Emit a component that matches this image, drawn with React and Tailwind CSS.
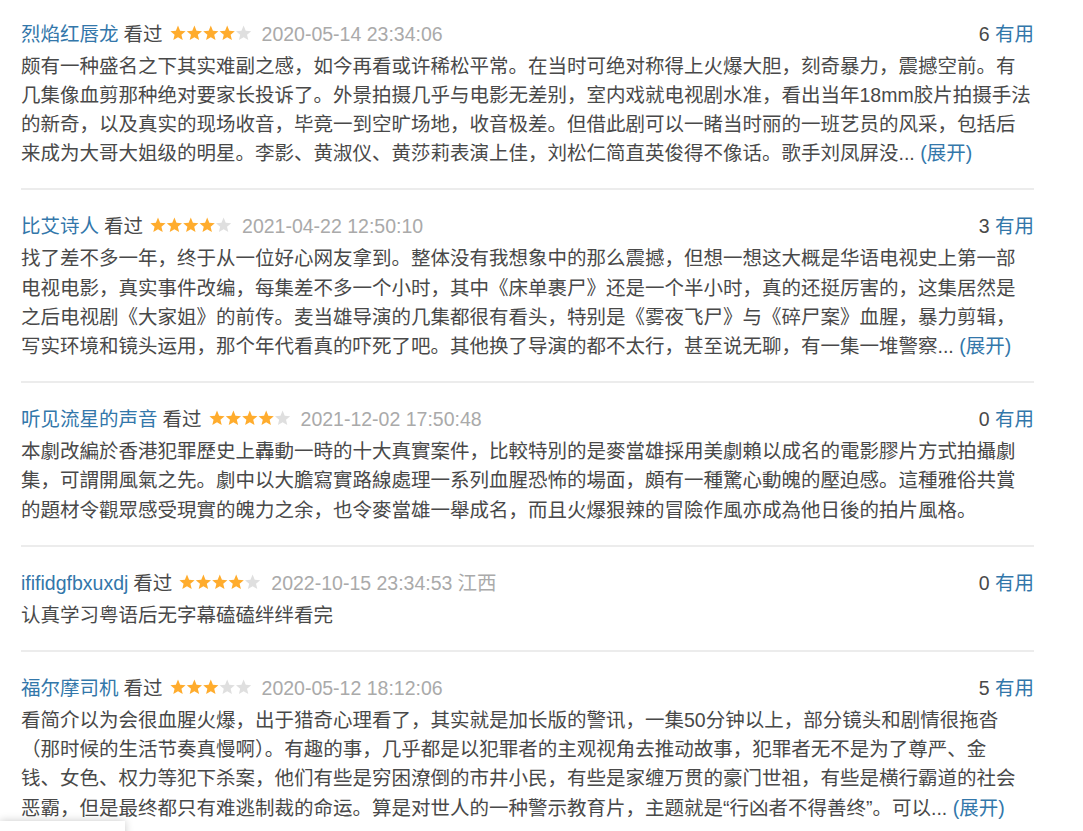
import React from "react";

const STAR =
  "8,0.6 10.12,5.69 15.61,6.13 11.42,9.71 12.70,15.07 8,12.2 3.30,15.07 4.58,9.71 0.39,6.13 5.88,5.69";

function Stars({ value }) {
  return (
    <svg width="82" height="16" viewBox="0 0 82 16" className="ml-[7px] mb-[3px] shrink-0">
      {[0, 1, 2, 3, 4].map((i) => (
        <polygon
          key={i}
          points={STAR}
          transform={`translate(${i * 16.4} 0)`}
          fill={i < value ? "#ffac2d" : "#dfdfdf"}
        />
      ))}
    </svg>
  );
}

const reviews = [
  {
    user: "烈焰红唇龙",
    rating: 4,
    time: "2020-05-14 23:34:06",
    votes: 6,
    lines: [
      "颇有一种盛名之下其实难副之感，如今再看或许稀松平常。在当时可绝对称得上火爆大胆，刻奇暴力，震撼空前。有",
      "几集像血剪那种绝对要家长投诉了。外景拍摄几乎与电影无差别，室内戏就电视剧水准，看出当年18mm胶片拍摄手法",
      "的新奇，以及真实的现场收音，毕竟一到空旷场地，收音极差。但借此剧可以一睹当时丽的一班艺员的风采，包括后",
      "来成为大哥大姐级的明星。李影、黄淑仪、黄莎莉表演上佳，刘松仁简直英俊得不像话。歌手刘凤屏没...",
    ],
    more: true,
  },
  {
    user: "比艾诗人",
    rating: 4,
    time: "2021-04-22 12:50:10",
    votes: 3,
    lines: [
      "找了差不多一年，终于从一位好心网友拿到。整体没有我想象中的那么震撼，但想一想这大概是华语电视史上第一部",
      "电视电影，真实事件改编，每集差不多一个小时，其中《床单裹尸》还是一个半小时，真的还挺厉害的，这集居然是",
      "之后电视剧《大家姐》的前传。麦当雄导演的几集都很有看头，特别是《雾夜飞尸》与《碎尸案》血腥，暴力剪辑，",
      "写实环境和镜头运用，那个年代看真的吓死了吧。其他换了导演的都不太行，甚至说无聊，有一集一堆警察...",
    ],
    more: true,
  },
  {
    user: "听见流星的声音",
    rating: 4,
    time: "2021-12-02 17:50:48",
    votes: 0,
    lines: [
      "本劇改編於香港犯罪歷史上轟動一時的十大真實案件，比較特別的是麥當雄採用美劇賴以成名的電影膠片方式拍攝劇",
      "集，可謂開風氣之先。劇中以大膽寫實路線處理一系列血腥恐怖的場面，頗有一種驚心動魄的壓迫感。這種雅俗共賞",
      "的題材令觀眾感受現實的魄力之余，也令麥當雄一舉成名，而且火爆狠辣的冒險作風亦成為他日後的拍片風格。",
    ],
  },
  {
    user: "ififidgfbxuxdj",
    rating: 4,
    time: "2022-10-15 23:34:53",
    place: "江西",
    votes: 0,
    lines: ["认真学习粤语后无字幕磕磕绊绊看完"],
  },
  {
    user: "福尔摩司机",
    rating: 3,
    time: "2020-05-12 18:12:06",
    votes: 5,
    lines: [
      "看简介以为会很血腥火爆，出于猎奇心理看了，其实就是加长版的警讯，一集50分钟以上，部分镜头和剧情很拖沓",
      "（那时候的生活节奏真慢啊）。有趣的事，几乎都是以犯罪者的主观视角去推动故事，犯罪者无不是为了尊严、金",
      "钱、女色、权力等犯下杀案，他们有些是穷困潦倒的市井小民，有些是家缠万贯的豪门世祖，有些是横行霸道的社会",
      "恶霸，但是最终都只有难逃制裁的命运。算是对世人的一种警示教育片，主题就是“行凶者不得善终”。可以...",
    ],
    more: true,
    last: true,
  },
];

function Review({ r, first }) {
  return (
    <div
      className={`${first ? "pt-[19.5px]" : "pt-[22px]"} ${
        r.last ? "" : "pb-[20px] border-b-2 border-[#ececec]"
      }`}
    >
      <div className="flex items-center justify-between h-[29px] leading-[29px] whitespace-nowrap">
        <div className="flex items-center">
          <span className="text-[#3377aa]">{r.user}</span>
          <span className="ml-[5px] text-[#494949]">看过</span>
          <Stars value={r.rating} />
          <span className="ml-[10px] text-[#aaaaaa]">{r.time}</span>
          {r.place && <span className="ml-[5px] text-[#aaaaaa]">{r.place}</span>}
        </div>
        <div>
          <span className="text-[#494949]">{r.votes}</span>{" "}
          <span className="text-[#3377aa]">有用</span>
        </div>
      </div>
      <div className="mt-[3px] text-[#494949] leading-[29.2px]">
        {r.lines.map((line, i) => (
          <div key={i} className="whitespace-nowrap">
            {line}
            {r.more && i === r.lines.length - 1 && (
              <span className="text-[#3377aa]"> (展开)</span>
            )}
          </div>
        ))}
      </div>
    </div>
  );
}

export default function App() {
  return (
    <div
      className="relative w-[1083px] h-[831px] overflow-hidden bg-white pl-[21px] pr-[49px] text-[19.5px]"
      style={{ fontFamily: '"Liberation Sans", "Noto Sans CJK SC", sans-serif' }}
    >
      {reviews.map((r, i) => (
        <Review key={i} r={r} first={i === 0} />
      ))}
      <div className="absolute left-0 top-[821px] w-[125px] h-[20px] bg-white shadow-[0_0_8px_rgba(0,0,0,0.22)]" />
    </div>
  );
}
